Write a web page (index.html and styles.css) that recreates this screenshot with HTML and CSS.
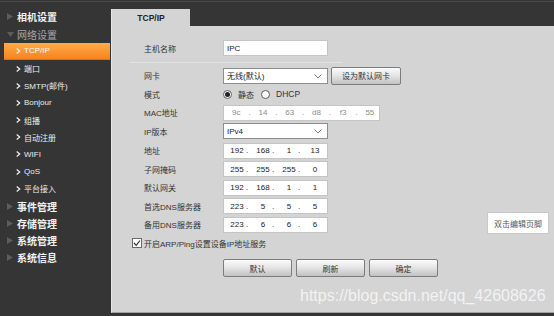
FILE: index.html
```html
<!DOCTYPE html>
<html lang="zh-CN">
<head>
    <meta charset="UTF-8">
    <title>TCP/IP</title>
    <link rel="stylesheet" href="styles.css">
</head>
<body>
<div class="page">
    <nav class="sidebar">
        <ul class="menu">
            <li class="group"><svg class="arrow" width="6" height="7"><polygon points="0,0 6,3.5 0,7"/></svg>相机设置</li>
            <li class="group open"><svg class="arrow down" width="7" height="5"><polygon points="0,0 7,0 3.5,5"/></svg>网络设置</li>
            <li class="sub active"><svg class="chev" width="5" height="6"><polyline points="0.7,0.5 3.7,3 0.7,5.5"/></svg>TCP/IP</li>
            <li class="sub"><svg class="chev" width="5" height="6"><polyline points="0.7,0.5 3.7,3 0.7,5.5"/></svg>端口</li>
            <li class="sub"><svg class="chev" width="5" height="6"><polyline points="0.7,0.5 3.7,3 0.7,5.5"/></svg>SMTP(邮件)</li>
            <li class="sub"><svg class="chev" width="5" height="6"><polyline points="0.7,0.5 3.7,3 0.7,5.5"/></svg>Bonjour</li>
            <li class="sub"><svg class="chev" width="5" height="6"><polyline points="0.7,0.5 3.7,3 0.7,5.5"/></svg>组播</li>
            <li class="sub"><svg class="chev" width="5" height="6"><polyline points="0.7,0.5 3.7,3 0.7,5.5"/></svg>自动注册</li>
            <li class="sub"><svg class="chev" width="5" height="6"><polyline points="0.7,0.5 3.7,3 0.7,5.5"/></svg>WIFI</li>
            <li class="sub"><svg class="chev" width="5" height="6"><polyline points="0.7,0.5 3.7,3 0.7,5.5"/></svg>QoS</li>
            <li class="sub"><svg class="chev" width="5" height="6"><polyline points="0.7,0.5 3.7,3 0.7,5.5"/></svg>平台接入</li>
            <li class="group"><svg class="arrow" width="6" height="7"><polygon points="0,0 6,3.5 0,7"/></svg>事件管理</li>
            <li class="group"><svg class="arrow" width="6" height="7"><polygon points="0,0 6,3.5 0,7"/></svg>存储管理</li>
            <li class="group"><svg class="arrow" width="6" height="7"><polygon points="0,0 6,3.5 0,7"/></svg>系统管理</li>
            <li class="group"><svg class="arrow" width="6" height="7"><polygon points="0,0 6,3.5 0,7"/></svg>系统信息</li>
        </ul>
    </nav>

    <main class="main">
        <div class="tabs">
            <div class="tab">TCP/IP</div>
        </div>
        <section class="panel">
            <div class="row">
                <span class="label">主机名称</span>
                <input class="text" type="text" value="IPC">
            </div>
            <div class="sep"></div>
            <div class="row">
                <span class="label">网卡</span>
                <div class="select">无线(默认)<svg class="caret" width="8" height="5"><polyline points="0.5,0.5 4,4 7.5,0.5"/></svg></div>
                <button class="btn btn-nic">设为默认网卡</button>
            </div>
            <div class="row">
                <span class="label">模式</span>
                <span class="radio checked"></span><span class="radio-text">静态</span>
                <span class="radio"></span><span class="radio-text latin">DHCP</span>
            </div>
            <div class="row">
                <span class="label">MAC地址</span>
                <div class="ipbox mac">
                    <span class="seg">9c</span><span class="dot">.</span>
                    <span class="seg">14</span><span class="dot">.</span>
                    <span class="seg">63</span><span class="dot">.</span>
                    <span class="seg">d8</span><span class="dot">.</span>
                    <span class="seg">f3</span><span class="dot">.</span>
                    <span class="seg">55</span>
                </div>
            </div>
            <div class="row">
                <span class="label">IP版本</span>
                <div class="select">IPv4<svg class="caret" width="8" height="5"><polyline points="0.5,0.5 4,4 7.5,0.5"/></svg></div>
            </div>
            <div class="row first-ip">
                <span class="label">地址</span>
                <div class="ipbox">
                    <span class="seg">192</span><span class="dot">.</span>
                    <span class="seg">168</span><span class="dot">.</span>
                    <span class="seg">1</span><span class="dot">.</span>
                    <span class="seg">13</span>
                </div>
            </div>
            <div class="row">
                <span class="label">子网掩码</span>
                <div class="ipbox">
                    <span class="seg">255</span><span class="dot">.</span>
                    <span class="seg">255</span><span class="dot">.</span>
                    <span class="seg">255</span><span class="dot">.</span>
                    <span class="seg">0</span>
                </div>
            </div>
            <div class="row">
                <span class="label">默认网关</span>
                <div class="ipbox">
                    <span class="seg">192</span><span class="dot">.</span>
                    <span class="seg">168</span><span class="dot">.</span>
                    <span class="seg">1</span><span class="dot">.</span>
                    <span class="seg">1</span>
                </div>
            </div>
            <div class="row">
                <span class="label">首选DNS服务器</span>
                <div class="ipbox">
                    <span class="seg">223</span><span class="dot">.</span>
                    <span class="seg">5</span><span class="dot">.</span>
                    <span class="seg">5</span><span class="dot">.</span>
                    <span class="seg">5</span>
                </div>
            </div>
            <div class="row">
                <span class="label">备用DNS服务器</span>
                <div class="ipbox">
                    <span class="seg">223</span><span class="dot">.</span>
                    <span class="seg">6</span><span class="dot">.</span>
                    <span class="seg">6</span><span class="dot">.</span>
                    <span class="seg">6</span>
                </div>
            </div>
            <div class="row check-row">
                <span class="checkbox"><svg width="8" height="8"><polyline points="1,4 3.2,6.3 7,1.5"/></svg></span>
                <span>开启ARP/Ping设置设备IP地址服务</span>
            </div>
            <div class="actions">
                <button class="btn">默认</button>
                <button class="btn">刷新</button>
                <button class="btn">确定</button>
            </div>

            <div class="footer-note">双击编辑页脚</div>
            <div class="watermark">https://blog.csdn.net/qq_42608626</div>
        </section>
    </main>
</div>
</body>
</html>
```

FILE: styles.css
```css
* {
    box-sizing: border-box;
}
html, body {
    margin: 0;
}
body {
    background: #353535;
    padding-top: 1px;
    font-family: "Liberation Sans", "Noto Sans CJK SC", sans-serif;
    color: #333;
    overflow: hidden;
}
.page {
    display: flex;
    height: 315px;
    border-top: 1px solid #4a4a4a;
}

/* left menu */
.sidebar {
    width: 111px;
    padding-top: 6.4px;
}
.menu {
    list-style: none;
    margin: 0;
    padding: 0;
}
.menu li {
    height: 17.2px;
    display: flex;
    align-items: center;
    margin: 0 1.5px 0 4px;
}
.group {
    padding-left: 3px;
    font-size: 10px;
    font-weight: bold;
    color: #f2f2f2;
}
.group .arrow {
    margin-right: 4px;
    fill: #5c5c5c;
}
.group.open {
    color: #a6a6a6;
    font-weight: normal;
}
.group .arrow.down {
    margin-right: 3px;
}
.sub {
    padding-left: 12px;
    font-size: 8px;
    color: #ececec;
}
.sub .chev {
    margin-right: 3px;
    fill: none;
    stroke: #f2f2f2;
    stroke-width: 1.2;
}
.sub.active {
    background: linear-gradient(#ffac48, #f8831f);
    border-bottom: 1px solid #e07010;
    color: #fff;
}

/* content */
.main {
    flex: 1;
    display: flex;
    flex-direction: column;
    padding-top: 7px;
    padding-bottom: 3px;
}
.tabs {
    display: flex;
}
.tab {
    width: 79px;
    height: 17px;
    background: #d4d4d4;
    border-left: 1px solid #e6e6e6;
    font-size: 8.5px;
    font-weight: bold;
    color: #222;
    display: flex;
    align-items: center;
    justify-content: center;
}
.panel {
    flex: 1;
    position: relative;
    background: #d4d4d4;
    border-left: 1px solid #e6e6e6;
    border-bottom: 1px solid #a2a2a2;
    padding: 12.75px 0 0 32px;
}
.row {
    display: flex;
    align-items: center;
    height: 18.5px;
    font-size: 8px;
}
.row .label {
    width: 79px;
    color: #333;
}
.first-ip {
    margin-top: 1px;
}
.sep {
    height: 1px;
    width: 212px;
    margin: 4.75px 0 3.25px -14px;
    background: #e2e2e2;
}
.text {
    width: 105px;
    height: 16px;
    border: 1px solid #c4c4c4;
    background: #fff;
    padding: 0 0 0 3px;
    font-family: inherit;
    font-size: 8px;
    color: #222;
    outline: none;
}
.select {
    position: relative;
    width: 105px;
    height: 16px;
    border: 1px solid #8e8e8e;
    background: #fff;
    padding-left: 3px;
    display: flex;
    align-items: center;
    color: #222;
}
.select .caret {
    position: absolute;
    right: 5px;
    top: 5px;
    fill: none;
    stroke: #777;
    stroke-width: 1;
}
.btn {
    height: 18px;
    width: 69px;
    padding: 0;
    border: 1px solid #7c7c7c;
    border-radius: 2px;
    background: linear-gradient(#fbfbfb, #e6e6e6 45%, #c2c2c2);
    font-family: inherit;
    font-size: 8px;
    color: #333;
}
.btn-nic {
    margin-left: 3px;
    width: 70px;
}
.radio {
    width: 9px;
    height: 9px;
    border: 1px solid #5c5c5c;
    border-radius: 50%;
    background: #fff;
    display: flex;
    align-items: center;
    justify-content: center;
}
.radio.checked::after {
    content: "";
    width: 5px;
    height: 5px;
    border-radius: 50%;
    background: #222;
}
.radio-text {
    margin: 0 7px 0 6px;
    color: #333;
}
.radio-text.latin {
    font-size: 8.5px;
}
.ipbox {
    width: 105px;
    height: 16px;
    border: 1px solid #c4c4c4;
    background: #fff;
    padding-left: 4px;
    display: flex;
    align-items: center;
    color: #222;
}
.ipbox .seg {
    width: 18px;
    text-align: center;
}
.ipbox .dot {
    width: 8px;
}
.ipbox.mac {
    width: 157px;
    padding-left: 3px;
    color: #8c8c8c;
}
.ipbox.mac .seg {
    width: 19px;
}
.ipbox.mac .dot {
    width: 8.6px;
    text-align: center;
}
.check-row {
    margin-left: -12px;
}
.checkbox {
    width: 10px;
    height: 10px;
    border: 1px solid #6a6a6a;
    background: #fff;
    margin-right: 2px;
    display: flex;
    align-items: center;
    justify-content: center;
}
.checkbox svg {
    fill: none;
    stroke: #333;
    stroke-width: 1.2;
}
.actions {
    display: flex;
    gap: 4px;
    margin-top: 6.75px;
    padding-left: 79px;
}

/* overlays */
.footer-note {
    position: absolute;
    left: 375px;
    top: 186px;
    width: 62px;
    height: 22px;
    background: #fff;
    border: 1px solid #c8c8c8;
    font-size: 8px;
    color: #555;
    display: flex;
    align-items: center;
    justify-content: center;
}
.watermark {
    position: absolute;
    left: 188px;
    top: 261.5px;
    font-size: 16px;
    line-height: 16px;
    color: rgba(255, 255, 255, 0.72);
    white-space: nowrap;
}
```
